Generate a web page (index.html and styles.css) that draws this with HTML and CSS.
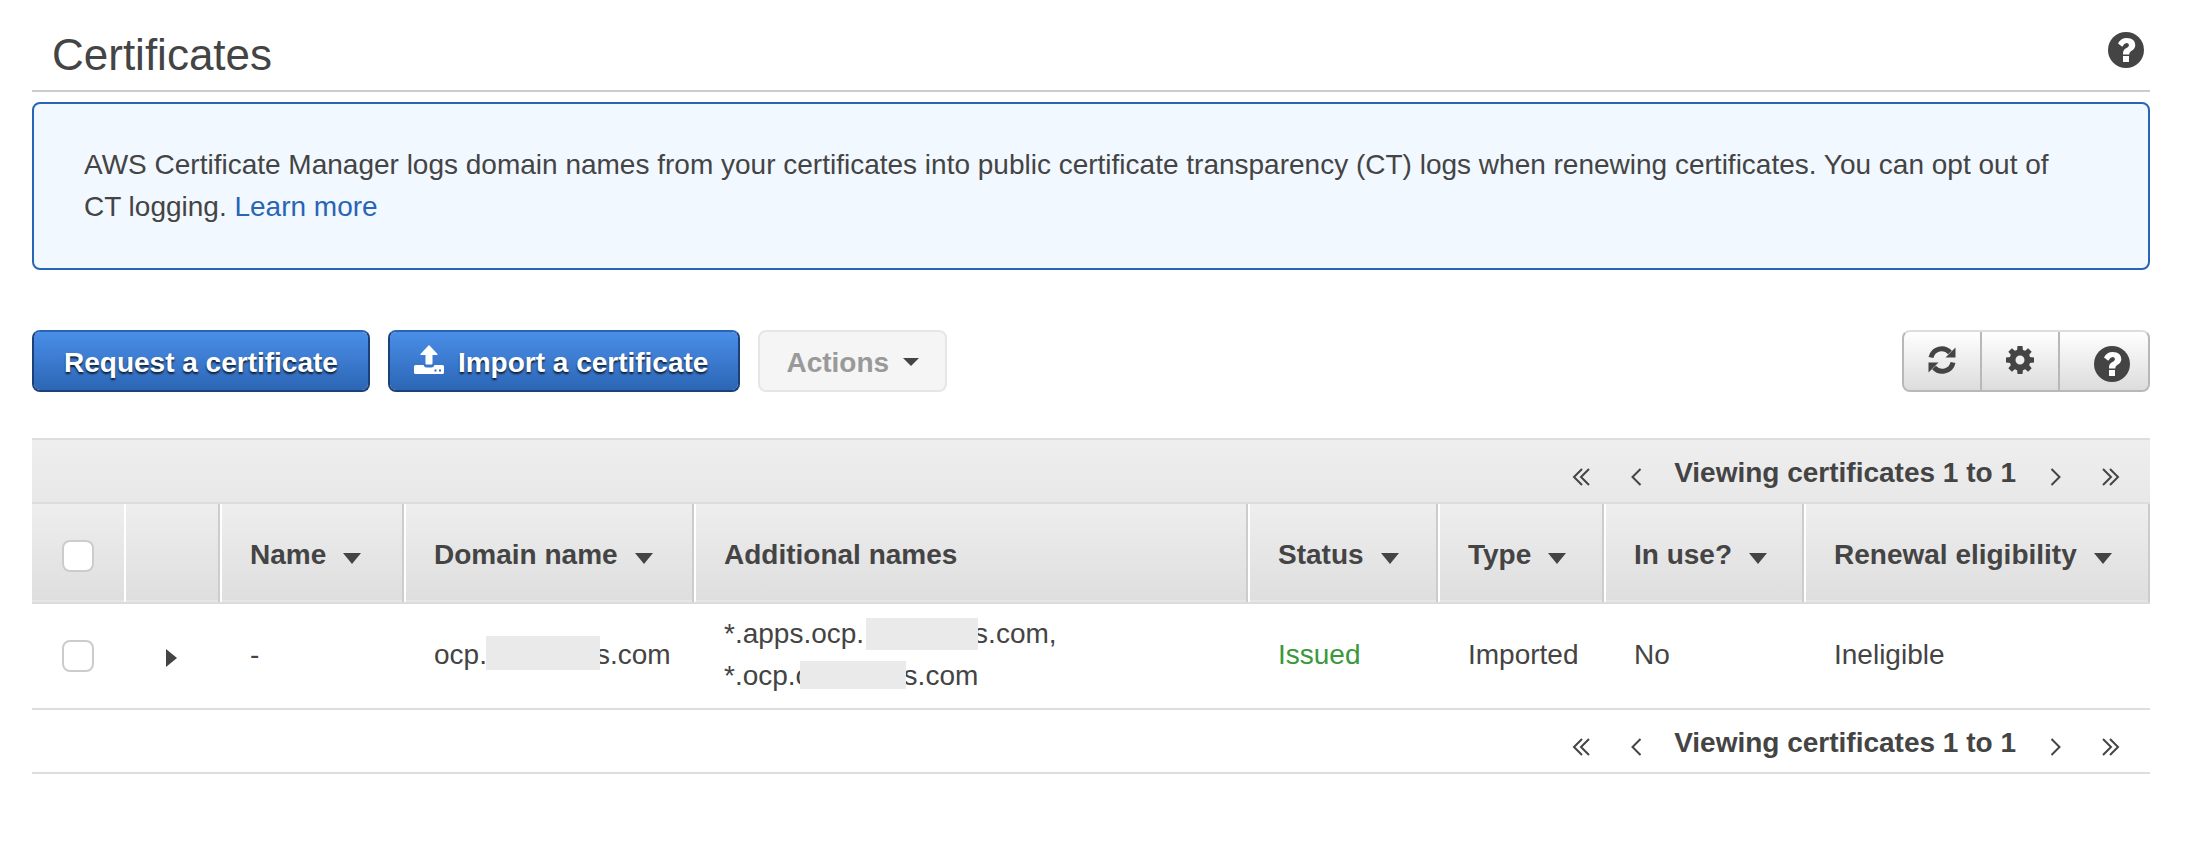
FILE: index.html
```html
<!DOCTYPE html>
<html lang="en">
<head>
<meta charset="utf-8">
<title>Certificates</title>
<link rel="stylesheet" href="styles.css">
</head>
<body>
<svg class="sprite" aria-hidden="true">
  <symbol id="help" viewBox="0 0 36 36">
    <circle cx="18" cy="18" r="18" fill="#444"/>
    <path fill="#fff" d="M10 11.6Q12.4 6 18.7 6Q27.4 6.4 27.3 13.2Q27 16.8 23.6 18.8Q21.2 20.2 21.2 22.4H15Q14.800 18.200 17.600 16.600Q21 15 21 13.200Q20.800 11 18.500 11Q16.200 11.200 14.300 14.800Z"/>
    <rect x="15" y="24" width="6" height="6" fill="#fff"/>
  </symbol>
  <symbol id="first" viewBox="0 0 18 18"><path d="M10 1L2 9l8 8M17 1L9 9l8 8" fill="none" stroke="#444" stroke-width="2"/></symbol>
  <symbol id="prev" viewBox="0 0 12 18"><path d="M10.500 1L2.500 9l8 8" fill="none" stroke="#444" stroke-width="2"/></symbol>
  <symbol id="next" viewBox="0 0 12 18"><path d="M1.500 1l8 8-8 8" fill="none" stroke="#444" stroke-width="2"/></symbol>
  <symbol id="last" viewBox="0 0 18 18"><path d="M1 1l8 8-8 8M8 1l8 8-8 8" fill="none" stroke="#444" stroke-width="2"/></symbol>
  <symbol id="down" viewBox="0 0 18 11"><path d="M0 0h18L9 11z" fill="#444"/></symbol>
</svg>
<main class="page">
  <header class="page-head">
    <h1 class="title">Certificates</h1>
    <button class="help-button" type="button" aria-label="Help"><svg class="help-icon"><use href="#help"/></svg></button>
  </header>

  <p class="notice">AWS Certificate Manager logs domain names from your certificates into public certificate transparency (CT) logs when renewing certificates. You can opt out of CT logging. <a class="link" href="#">Learn more</a></p>

  <div class="toolbar">
    <button class="btn primary" type="button">Request a certificate</button>
    <button class="btn primary with-icon" type="button">
      <svg class="upload-icon" viewBox="0 0 30 30" aria-hidden="true">
        <path fill="#fff" d="M14.500 0.500Q15 0 15.500 0.500L23.500 9Q24 10 23 10H18.500V18.500Q18.500 19.500 17.500 19.500H12.500Q11.500 19.500 11.500 18.500V10H7Q6 10 6.500 9ZM1.500 20H9.500Q10.500 22.500 12.500 22.500H17.500Q19.500 22.500 20.500 20H28.500Q30 20 30 21.500V27.500Q30 29 28.500 29H1.500Q0 29 0 27.500V21.500Q0 20 1.500 20Z"/>
        <rect x="20.500" y="24.500" width="2" height="2" fill="#3067b8"/>
        <rect x="25" y="24.500" width="2" height="2" fill="#3067b8"/>
      </svg>
      Import a certificate
    </button>
    <button class="btn actions" type="button" disabled>Actions
      <svg class="menu-caret" viewBox="0 0 16 8" aria-hidden="true"><path d="M0 0h16L8 8z" fill="#444"/></svg>
    </button>
    <div class="icon-group">
      <button class="icon-btn" type="button" aria-label="Refresh">
        <svg class="tool-icon" viewBox="0 0 28 28" aria-hidden="true">
          <g id="turn"><path d="M3 11.500A11 11 0 0 1 22 6.500" fill="none" stroke="#444" stroke-width="5"/><path d="M27.500 1.500V11.500H17.500Z" fill="#444"/></g>
          <use href="#turn" transform="rotate(180 14 14)"/>
        </svg>
      </button>
      <button class="icon-btn" type="button" aria-label="Settings">
        <svg class="tool-icon" viewBox="-14 -14 28 28" aria-hidden="true">
          <circle r="7.500" fill="none" stroke="#444" stroke-width="6"/>
          <g fill="#444">
            <path id="teeth" d="M-3-9L-2.500-14H2.500L3-9ZM-3 9L-2.500 14H2.500L3 9Z"/>
            <use href="#teeth" transform="rotate(45)"/><use href="#teeth" transform="rotate(90)"/><use href="#teeth" transform="rotate(135)"/>
          </g>
        </svg>
      </button>
      <button class="icon-btn help-tool" type="button" aria-label="Help"><svg class="help-icon"><use href="#help"/></svg></button>
    </div>
  </div>

  <section class="grid">
    <nav class="pager top" aria-label="Pages">
      <a class="step" href="#" aria-label="First"><svg class="double"><use href="#first"/></svg></a>
      <a class="step" href="#" aria-label="Previous"><svg class="single"><use href="#prev"/></svg></a>
      <span class="range">Viewing certificates 1 to 1</span>
      <a class="step" href="#" aria-label="Next"><svg class="single"><use href="#next"/></svg></a>
      <a class="step" href="#" aria-label="Last"><svg class="double"><use href="#last"/></svg></a>
    </nav>
    <table class="certs">
      <colgroup>
        <col class="c-check"><col class="c-expand"><col class="c-name"><col class="c-domain"><col><col class="c-status"><col class="c-type"><col class="c-use"><col class="c-renewal">
      </colgroup>
      <thead>
        <tr>
          <th class="check-cell"><input class="check" type="checkbox" aria-label="Select all"></th>
          <th></th>
          <th>Name<svg class="sort"><use href="#down"/></svg></th>
          <th>Domain name<svg class="sort"><use href="#down"/></svg></th>
          <th>Additional names</th>
          <th>Status<svg class="sort"><use href="#down"/></svg></th>
          <th>Type<svg class="sort"><use href="#down"/></svg></th>
          <th>In use?<svg class="sort"><use href="#down"/></svg></th>
          <th>Renewal eligibility<svg class="sort"><use href="#down"/></svg></th>
        </tr>
      </thead>
      <tbody>
        <tr>
          <td class="check-cell"><input class="check" type="checkbox" aria-label="Select certificate"></td>
          <td class="expand-cell"><button class="expand" type="button" aria-label="Expand"><svg class="expand-icon" viewBox="0 0 11 18"><path d="M0 0l11 9-11 9z" fill="#444"/></svg></button></td>
          <td>-</td>
          <td>ocp.<span class="mask mask-domain"></span>s.com</td>
          <td>*.apps.ocp.<span class="mask mask-apps"></span>s.com,<br>*.ocp.c<span class="mask mask-ocp"></span>s.com</td>
          <td class="issued">Issued</td>
          <td>Imported</td>
          <td>No</td>
          <td>Ineligible</td>
        </tr>
      </tbody>
    </table>
    <nav class="pager" aria-label="Pages, bottom">
      <a class="step" href="#" aria-label="First"><svg class="double"><use href="#first"/></svg></a>
      <a class="step" href="#" aria-label="Previous"><svg class="single"><use href="#prev"/></svg></a>
      <span class="range">Viewing certificates 1 to 1</span>
      <a class="step" href="#" aria-label="Next"><svg class="single"><use href="#next"/></svg></a>
      <a class="step" href="#" aria-label="Last"><svg class="double"><use href="#last"/></svg></a>
    </nav>
  </section>
</main>
</body>
</html>
```

FILE: styles.css
```css
* { box-sizing: border-box; }
body {
  margin: 0;
  background: #fff;
  color: #444;
  font: 28px/42px "Liberation Sans", Arial, sans-serif;
}
button { font: inherit; color: inherit; cursor: pointer; }
svg { display: block; flex: none; }
.sprite { position: absolute; width: 0; height: 0; }
.page { padding: 24px 42px 24px 32px; }

.page-head {
  display: flex;
  justify-content: space-between;
  align-items: flex-start;
  padding: 0 6px 4px 20px;
  border-bottom: 2px solid #ccc;
}
.title { margin: 0; font-size: 44px; line-height: 62px; font-weight: 400; }
.help-button { padding: 8px 0 0; border: 0; background: none; }
.help-icon { width: 36px; height: 36px; }

.notice {
  margin: 10px 0 60px;
  padding: 40px 66px 40px 50px;
  border: 2px solid #2a64b5;
  border-radius: 8px;
  background: #f2f8ff;
}
.link { color: #2a64b5; text-decoration: none; }

.toolbar { display: flex; gap: 18px; margin-bottom: 46px; }
.btn {
  display: flex;
  align-items: center;
  padding: 10px 30px 6px;
  border: 2px solid;
  border-radius: 8px;
  font-weight: 700;
  white-space: nowrap;
}
.primary {
  border-color: #2a64b5 #1c4079 #1c4079;
  background: linear-gradient(#4a8ee8, #2c66b5);
  background-clip: padding-box;
  color: #fff;
  text-shadow: 0 2px 2px rgba(0, 0, 0, .75);
}
.with-icon { gap: 14px; padding-left: 24px; }
.upload-icon { width: 30px; height: 30px; margin-bottom: 6px; }
.actions { gap: 14px; padding: 10px 26px 6px; border-color: #e6e6e6; background: #f5f5f5; color: #999; cursor: default; }
.menu-caret { width: 16px; height: 8px; margin-bottom: 2px; }

.icon-group {
  display: flex;
  margin-left: auto;
  border: 2px solid;
  border-color: #ddd #b8b8b8 #b8b8b8;
  border-radius: 8px;
  background: linear-gradient(#fff, #dcdcdc);
  background-clip: padding-box;
}
.icon-btn {
  display: flex;
  align-items: flex-start;
  padding: 14px 24px 0;
  border: 0;
  border-right: 2px solid #b8b8b8;
  background: none;
}
.help-tool { padding: 14px 18px 0 34px; border-right: 0; }
.tool-icon { width: 28px; height: 28px; }

.pager {
  display: flex;
  justify-content: flex-end;
  align-items: center;
  gap: 40px;
  padding: 12px 30px 8px;
  border-bottom: 2px solid #ddd;
}
.top { border-top: 2px solid #ddd; background: linear-gradient(#eee, #e8e8e8); }
.range { margin: 0 -6px 0 -8px; font-weight: 700; }
.step { display: flex; padding-top: 8px; }
.double { width: 18px; height: 18px; }
.single { width: 12px; height: 18px; }

.certs { width: 100%; table-layout: fixed; border-collapse: separate; border-spacing: 0; }
.c-check { width: 92px; }
.c-expand { width: 96px; }
.c-name { width: 184px; }
.c-domain { width: 290px; }
.c-status { width: 190px; }
.c-type { width: 166px; }
.c-use { width: 200px; }
.c-renewal { width: 346px; }
.certs th {
  height: 100px;
  padding: 30px 0 26px 30px;
  border-bottom: 2px solid #dcdcdc;
  background: linear-gradient(#eee, #dedede);
  box-shadow: inset 2px 0 #fff, inset -2px 0 #ccc, inset 0 -2px #e6e6e6;
  text-align: left;
  white-space: nowrap;
}
.certs td {
  padding: 9px 0 11px 30px;
  border-bottom: 2px solid #ddd;
  white-space: nowrap;
}
.certs th.check-cell { padding: 16px 0 10px 30px; box-shadow: inset 0 -2px #e6e6e6; }
.certs th.check-cell + th { box-shadow: inset 2px 0 #fff, inset -2px 0 #ccc, inset 0 -2px #e6e6e6; }
.certs td.check-cell { padding: 10px 0 10px 30px; }
.certs .expand-cell { padding: 12px 0 8px 42px; }
.check {
  display: block;
  appearance: none;
  width: 32px;
  height: 32px;
  margin: 0;
  border: 2px solid #ccc;
  border-radius: 8px;
  background: #fff;
}
.sort { display: inline-block; width: 18px; height: 11px; margin-left: 17px; }
.expand { display: block; padding: 0; border: 0; background: none; }
.expand-icon { width: 11px; height: 18px; }
.issued { color: #3b983b; }

/* Hidden part of a domain name, overlapping the letters beside it */
.mask { position: relative; display: inline-block; background: #eaeaea; }
.mask-domain { width: 114px; height: 34px; margin: 0 -4px 0 -1px; vertical-align: -6px; }
.mask-apps { width: 112px; height: 32px; margin: 0 -4px 0 2px; vertical-align: -7px; }
.mask-ocp { width: 106px; height: 28px; margin: 0 -2px 0 -10px; vertical-align: -4px; }
```
